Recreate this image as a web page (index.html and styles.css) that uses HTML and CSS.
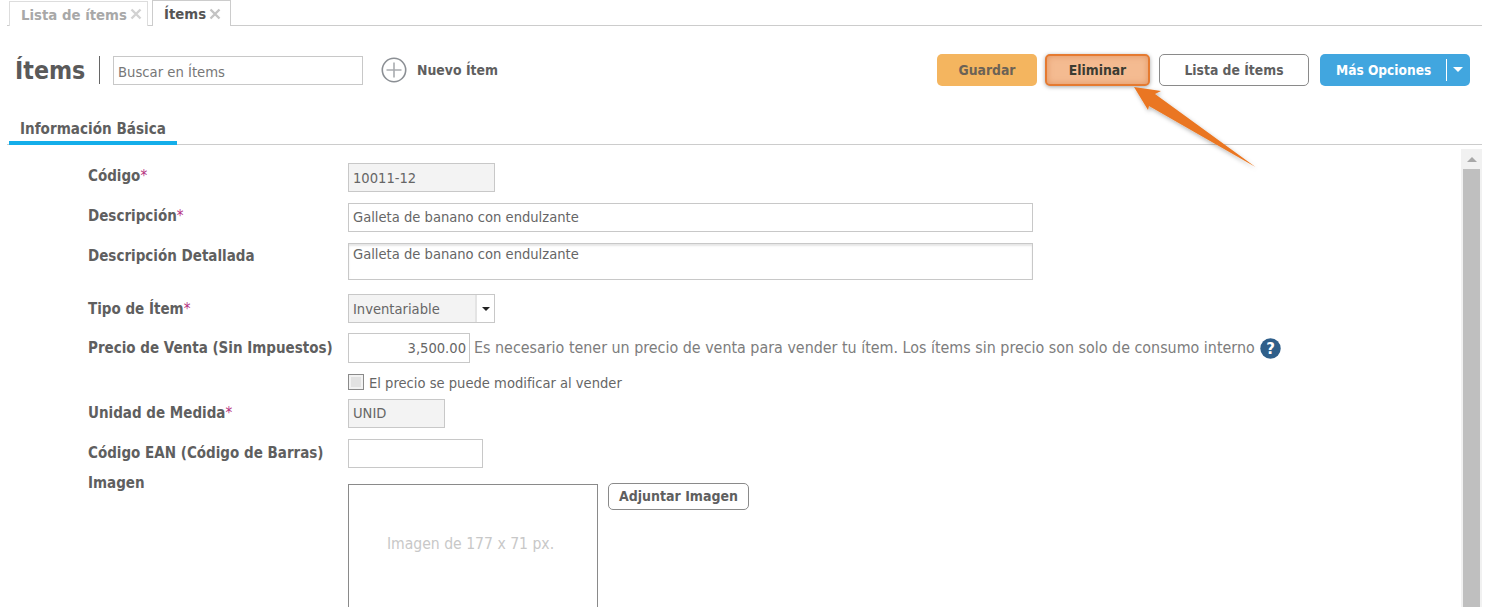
FILE: index.html
```html
<!DOCTYPE html>
<html lang="es">
<head>
<meta charset="utf-8">
<title>Ítems</title>
<link rel="stylesheet" href="styles.css">
</head>
<body>
<div class="page">
  <nav class="tabs">
    <div class="tab"><span class="tab-text">Lista de ítems</span><svg class="tab-x" width="12" height="12" viewBox="0 0 12 12"><path d="M1.5 1.5l9 9M10.5 1.5l-9 9" stroke="#d2d2d2" stroke-width="2.4"/></svg></div>
    <div class="tab tab-active"><span class="tab-text">Ítems</span><svg class="tab-x" width="12" height="12" viewBox="0 0 12 12"><path d="M1.5 1.5l9 9M10.5 1.5l-9 9" stroke="#c4c4c4" stroke-width="2.4"/></svg></div>
  </nav>
  <header class="toolbar">
    <h1 class="title">Ítems</h1>
    <div class="divider"></div>
    <div class="search">Buscar en Ítems</div>
    <svg class="plus" width="26" height="26" viewBox="0 0 26 26"><circle cx="13" cy="13" r="11.7" fill="none" stroke="#8b8f94" stroke-width="1.6"/><path d="M13 5.5v15M5.5 13h15" stroke="#a9acb0" stroke-width="1.6"/></svg>
    <span class="new">Nuevo Ítem</span>
    <div class="actions">
      <button class="btn btn-save">Guardar</button>
      <button class="btn btn-del">Eliminar</button>
      <button class="btn btn-list">Lista de Ítems</button>
      <button class="btn btn-more"><span class="more-text">Más Opciones</span><span class="more-sep"></span><span class="more-caret"></span></button>
    </div>
  </header>
  <div class="section-tabs"><div class="section-tab">Información Básica</div></div>
  <div class="body">
    <main class="form">
      <div class="row r-code"><label class="label">Código<i class="req">*</i></label><div class="field ro w147">10011-12</div></div>
      <div class="row r-desc"><label class="label">Descripción<i class="req">*</i></label><div class="field w685">Galleta de banano con endulzante</div></div>
      <div class="row r-long"><label class="label">Descripción Detallada</label><div class="field area w685">Galleta de banano con endulzante</div></div>
      <div class="row r-type"><label class="label">Tipo de Ítem<i class="req">*</i></label><div class="select"><span class="select-val">Inventariable</span><span class="select-btn"><span class="select-caret"></span></span></div></div>
      <div class="row r-price"><label class="label">Precio de Venta (Sin Impuestos)</label><div class="field num w122">3,500.00</div><span class="hint">Es necesario tener un precio de venta para vender tu ítem. Los ítems sin precio son solo de consumo interno</span><svg class="help" width="21" height="21" viewBox="0 0 21 21"><circle cx="10.5" cy="10.5" r="10.2" fill="#2f5f8a"/><text x="10.5" y="15.6" text-anchor="middle" class="help-q">?</text></svg></div>
      <div class="row r-check"><span class="label"></span><span class="check"></span><span class="check-text">El precio se puede modificar al vender</span></div>
      <div class="row r-unit"><label class="label">Unidad de Medida<i class="req">*</i></label><div class="field ro w97 unit-val">UNID</div></div>
      <div class="row r-ean"><label class="label">Código EAN (Código de Barras)</label><div class="field w135"></div></div>
      <div class="row r-img"><label class="label">Imagen</label><div class="img-box">Imagen de 177 x 71 px.</div><button class="attach">Adjuntar Imagen</button></div>
    </main>
    <aside class="scroll"><div class="scroll-up"><span class="scroll-arrow"></span></div><div class="scroll-thumb"></div></aside>
  </div>
  <svg class="arrow" width="140" height="100" viewBox="0 0 140 100">
    <defs><filter id="sh" x="-20%" y="-20%" width="140%" height="140%"><feDropShadow dx="1" dy="2" stdDeviation="2" flood-color="#000" flood-opacity=".3"/></filter></defs>
    <path d="M4 3 L31 7 L25 10 L125.500 83 L19 22 L18 26 Z" fill="#ea7620" filter="url(#sh)"/>
  </svg>
</div>
</body>
</html>
```
FILE: styles.css
```css
* { box-sizing: border-box; }
html, body { margin: 0; height: 607px; overflow: hidden; background: #fff; }
body { font-family: "DejaVu Sans Condensed", Tahoma, "DejaVu Sans", sans-serif; font-size: 14.6px; color: #5f5f5f; }
.page { position: relative; width: 1482px; height: 607px; overflow: hidden; padding-left: 7px; }
.tabs { display: flex; height: 26px; padding-left: 2px; gap: 4px; border-bottom: 1px solid #ccc; }
.tab { display: flex; align-items: center; height: 25px; margin-top: 1px; padding: 0 0 0 11px; border: 1px solid #ddd; border-bottom: 0; font-weight: bold; font-size: 14.8px; color: #a8a8a8; background: #fff; width: 139px; }
.tab-active { width: 79px; height: 26px; margin-top: 0; border-color: #ccc; color: #555; }
.tab-x { margin-left: 3px; flex: none; }
.toolbar { display: flex; align-items: center; height: 88px; padding-left: 8px; }
.title { margin: 0; font-size: 24.7px; font-weight: bold; color: #5a5a5a; width: 84px; }
.divider { width: 1px; height: 28px; background: #666; }
.search { width: 250px; height: 29px; margin-left: 13px; border: 1px solid #c8c8c8; padding: 6px 4px; color: #777; font-size: 14.7px; line-height: 17px; }
.plus { margin-left: 18px; }
.new { margin-left: 10px; font-weight: bold; font-size: 13.9px; color: #5f5f5f; }
.actions { display: flex; margin-left: auto; gap: 8px; margin-right: 12px; margin-top: -1px; }
.btn { height: 32px; border-radius: 5px; border: 1px solid transparent; font: bold 13.8px "DejaVu Sans Condensed", Tahoma, sans-serif; padding: 0; }
.btn-save { width: 100px; background: #f4b55f; color: #6b6256; }
.btn-del { width: 105px; background: #f4bb91; color: #3c3c32; border: 2px solid #e57a30; box-shadow: 0 1px 4px rgba(0,0,0,.35), inset 0 0 6px rgba(210,110,50,.5); }
.btn-list { width: 150px; margin-left: 1px; background: #fff; color: #5f5f5f; border-color: #8a8a8a; }
.btn-more { width: 150px; margin-left: 3px; background: #41a6df; color: #fff; display: flex; align-items: center; padding-left: 15px; font-size: 13.6px; }
.more-text { width: 110px; text-align: left; }
.more-sep { width: 1px; height: 22px; background: #fff; }
.more-caret { margin-left: 6px; border: 5px solid transparent; border-top-color: #fff; border-bottom: 0; }
.section-tabs { height: 31px; border-bottom: 1px solid #ccc; padding-left: 2px; }
.section-tab { width: 168px; height: 31px; padding: 6px 0 0 11px; font-weight: bold; font-size: 15.1px; color: #5f5f5f; border-bottom: 4px solid #14aeea; }
.body { display: flex; height: 463px; }
.form { flex: 1; padding: 18px 0 0 81px; }
.row { display: flex; align-items: flex-start; }
.label { width: 260px; flex: none; font-weight: bold; font-size: 15px; color: #5f5f5f; line-height: 18px; }
.req { color: #b5307f; font-style: normal; font-weight: normal; }
.field { height: 29px; border: 1px solid #c8c8c8; padding: 0 4px; line-height: 27px; color: #666; background: #fff; }
.ro { background: #f3f3f3; }
.w147 { width: 147px; }
.w685 { width: 685px; }
.w122 { width: 122px; }
.w97 { width: 97px; }
.w135 { width: 135px; }
.area { height: 37px; line-height: 21px; box-shadow: inset 0 2px 2px rgba(0,0,0,.1); }
.num { text-align: right; height: 30px; line-height: 28px; padding-right: 3px; }
.unit-val { line-height: 25px; }
.r-code .label { margin-top: 4px; }
.r-desc { margin-top: 11px; }
.r-desc .label { margin-top: 4px; }
.r-desc .field { line-height: 25px; }
.r-long { margin-top: 11px; }
.r-long .label { margin-top: 4px; }
.r-long .field { line-height: 19px; }
.r-type { margin-top: 14px; }
.r-type .label { margin-top: 6px; }
.r-price { margin-top: 10px; }
.r-price .label { margin-top: 6px; }
.r-check { margin-top: 10px; align-items: center; height: 18px; }
.r-unit { margin-top: 8px; }
.r-unit .label { margin-top: 5px; }
.r-ean { margin-top: 11px; }
.r-ean .label { margin-top: 5px; }
.r-img { margin-top: 6px; }
.r-img .label { margin-top: 0; }
.select { display: flex; width: 147px; height: 29px; border: 1px solid #c8c8c8; }
.select-val { flex: 1; background: #f3f3f3; padding-left: 4px; line-height: 27px; color: #666; border-right: 2px solid #e4e4e4; }
.select-btn { width: 17px; display: flex; align-items: center; justify-content: center; border-left: 1px solid #fff; }
.select-caret { border: 4px solid transparent; border-top-color: #222; border-bottom: 0; }
.hint { margin-left: 4px; line-height: 29px; color: #7d7d7d; font-size: 15.9px; }
.help { margin: 5px 0 0 5px; flex: none; }
.help-q { fill: #fff; font: bold 15px "DejaVu Sans", sans-serif; }
.check { width: 16px; height: 16px; border: 1px solid #8a8a8a; background: #e2e2e2; box-shadow: inset 0 0 0 2px #f2f2f2; }
.check-text { margin-left: 5px; color: #666; }
.img-box { width: 250px; height: 200px; margin-top: 10px; border: 1px solid #8a8a8a; padding: 50px 5px 0 0; text-align: center; color: #c8c8c8; font-size: 15.6px; }
.attach { width: 141px; height: 27px; margin: 9px 0 0 10px; background: #fff; border: 1px solid #8a8a8a; border-radius: 5px; font: bold 14px "DejaVu Sans Condensed", Tahoma, sans-serif; color: #5f5f5f; padding: 0 0 2px; }
.scroll { width: 21px; flex: none; margin-top: 4px; background: #f1f1f1; padding: 0 2px; }
.scroll-up { height: 20px; display: flex; align-items: center; justify-content: center; }
.scroll-arrow { border: 5px solid transparent; border-bottom-color: #a8a8a8; border-top: 0; }
.scroll-thumb { height: 440px; background: #bfbfbf; }
.arrow { position: absolute; left: 1130px; top: 84px; }
```
